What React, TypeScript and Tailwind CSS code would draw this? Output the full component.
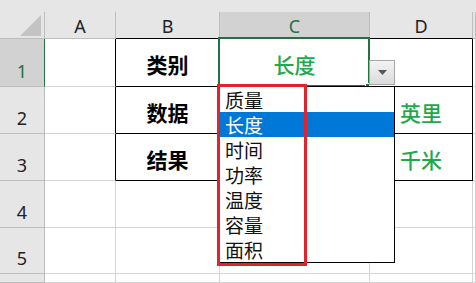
const cjk = { fontFamily: '"Noto Sans CJK SC", "Noto Sans", sans-serif' }

const cols = ['A', 'B', 'C', 'D', '']
const rows = [1, 2, 3, 4, 5, 6]

const data: Record<string, { text: string; cls: string }> = {
  'B1': { text: '类别', cls: 'font-bold text-black' },
  'C1': { text: '长度', cls: 'font-medium text-[#1ea94a]' },
  'B2': { text: '数据', cls: 'font-bold text-black' },
  'D2': { text: '英里', cls: 'font-medium text-[#1ea94a]' },
  'B3': { text: '结果', cls: 'font-bold text-black' },
  'D3': { text: '千米', cls: 'font-medium text-[#1ea94a]' },
}

const options = ['质量', '长度', '时间', '功率', '温度', '容量', '面积']

function cellBorder(col: string, row: number) {
  const inTable = row <= 3 && ['B', 'C', 'D'].includes(col)
  const right = inTable || (col === 'A' && row <= 3) ? 'border-r-black' : 'border-r-[#d4d4d4]'
  const bottom = inTable ? 'border-b-black' : 'border-b-[#d4d4d4]'
  return `${right} ${bottom}`
}

export default function App() {
  return (
    <div className="relative w-[476px] h-[283px] overflow-hidden bg-white select-none">
      <div className="h-[12px] bg-[#e6e6e6]" />
      <div
        className="grid grid-cols-[45px_71px_104px_150px_103px_1fr] grid-rows-[27px_48px_47px_47px_47px_46px_1fr] h-[271px]"
        style={{ fontFamily: '"Noto Sans", sans-serif' }}
      >
        {/* header row */}
        <div className="relative bg-[#e6e6e6] border-r border-b border-r-[#bdbdbd] border-b-[#bdbdbd]">
          <svg className="absolute right-[3px] bottom-[2px]" width="21" height="21" viewBox="0 0 21 21">
            <polygon points="21,0 21,21 0,21" fill="#c3c3c3" />
          </svg>
        </div>
        {cols.map((c) => (
          <div
            key={c || 'E'}
            className={`flex items-center justify-center pt-[2px] border-r border-b text-[18px] ${
              c === 'C'
                ? 'bg-[#d2d2d2] text-[#217346] border-r-[#bdbdbd] border-b-[#217346]'
                : c === 'B' || c === 'D'
                ? 'bg-[#e6e6e6] text-[#222] border-r-[#bdbdbd] border-b-black'
                : 'bg-[#e6e6e6] text-[#222] border-r-[#bdbdbd] border-b-[#bdbdbd]'
            }`}
          >
            {c}
          </div>
        ))}

        {rows.map((r) => (
          <RowCells key={r} row={r} />
        ))}
      </div>

      {/* selection on C1 */}
      <div className="absolute left-[218px] top-[37px] w-[152px] h-[50px] border-2 border-[#217346]" />
      <div className="absolute left-[365px] top-[83px] w-[5px] h-[5px] bg-[#217346] border border-white" />

      {/* dropdown arrow button */}
      <div className="absolute left-[369px] top-[60px] w-[26px] h-[25px] border border-[#a6a6a6] bg-gradient-to-b from-[#f3f3f3] to-[#dcdcdc] flex items-center justify-center">
        <svg width="9" height="5" viewBox="0 0 9 5">
          <polygon points="0,0 9,0 4.5,5" fill="#555" />
        </svg>
      </div>

      {/* dropdown list */}
      <div
        className="absolute left-[219px] top-[86px] w-[176px] h-[177px] border border-black bg-white flex flex-col"
        style={cjk}
      >
        {options.map((o, i) => (
          <div
            key={o}
            className={`h-[25px] leading-[25px] pl-[5px] text-[19px] ${
              i === 1 ? 'bg-[#0078d7] text-white' : 'text-[#111]'
            }`}
          >
            {o}
          </div>
        ))}
      </div>

      {/* red highlight */}
      <div className="absolute left-[217px] top-[84px] w-[90px] h-[182px] border-[3px] border-[#e3222b]" />
    </div>
  )
}

function RowCells({ row }: { row: number }) {
  const selected = row === 1
  return (
    <>
      <div
        className={`flex items-end justify-center pb-[1px] border-r border-b text-[18px] ${
          selected
            ? 'bg-[#d2d2d2] text-[#217346] border-r-[#217346] border-b-[#bdbdbd]'
            : 'bg-[#e6e6e6] text-[#222] border-r-[#bdbdbd] border-b-[#bdbdbd]'
        }`}
      >
        {row <= 5 ? row : ''}
      </div>
      {cols.map((c) => {
        const d = data[`${c}${row}`]
        return (
          <div
            key={c || 'E'}
            className={`flex items-center justify-center pt-[4px] border-r border-b ${cellBorder(c, row)}`}
            style={{ fontFamily: '"Noto Sans CJK SC", sans-serif' }}
          >
            {d && <span className={`text-[21px] leading-none ${d.cls}`}>{d.text}</span>}
          </div>
        )
      })}
    </>
  )
}
